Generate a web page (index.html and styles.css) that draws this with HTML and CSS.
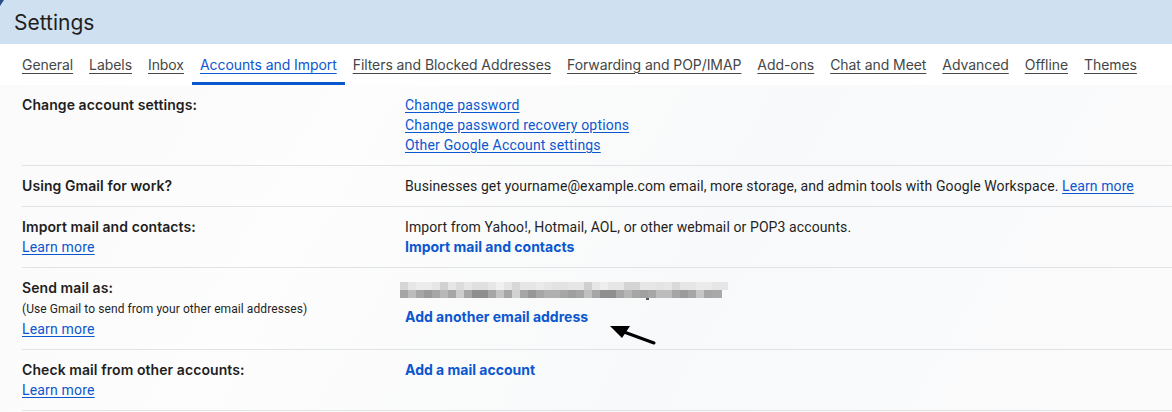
FILE: index.html
```html
<!DOCTYPE html>
<html>
<head>
<meta charset="utf-8">
<link rel="stylesheet" href="styles.css">
</head>
<body>
<div class="page">
  <header class="header">
    <svg class="corner" width="4" height="6" viewBox="0 0 4 6"><polygon points="0,0 4,0 0,6" fill="#2a4f86"/></svg>
    <h1 class="title">Settings</h1>
  </header>
  <nav class="tabs">
    <a class="tab">General</a>
    <a class="tab">Labels</a>
    <a class="tab">Inbox</a>
    <a class="tab active">Accounts and Import</a>
    <a class="tab">Filters and Blocked Addresses</a>
    <a class="tab">Forwarding and POP/IMAP</a>
    <a class="tab">Add-ons</a>
    <a class="tab">Chat and Meet</a>
    <a class="tab">Advanced</a>
    <a class="tab">Offline</a>
    <a class="tab">Themes</a>
  </nav>
  <main class="rows">
    <section class="row">
      <div class="label"><b>Change account settings:</b></div>
      <div class="value">
        <a class="link">Change password</a><br>
        <a class="link">Change password recovery options</a><br>
        <a class="link">Other Google Account settings</a>
      </div>
    </section>
    <section class="row">
      <div class="label"><b>Using Gmail for work?</b></div>
      <div class="value text">Businesses get yourname@example.com email, more storage, and admin tools with Google Workspace. <a class="link">Learn more</a></div>
    </section>
    <section class="row">
      <div class="label"><b>Import mail and contacts:</b><br><a class="link">Learn more</a></div>
      <div class="value text">Import from Yahoo!, Hotmail, AOL, or other webmail or POP3 accounts.<br><a class="action">Import mail and contacts</a></div>
    </section>
    <section class="row">
      <div class="label"><b>Send mail as:</b><br><span class="note">(Use Gmail to send from your other email addresses)</span><br><a class="link">Learn more</a></div>
      <div class="value sendas">
        <svg class="blur" width="328" height="18" viewBox="0 0 328 18">
          <g>
            <rect x="0" y="0" width="328" height="8" fill="#e6e6e6"/>
            <rect x="0" y="0" width="8" height="8" fill="#d6d6d6"/>
            <rect x="16" y="0" width="16" height="8" fill="#ececec"/>
            <rect x="40" y="0" width="8" height="8" fill="#d2d2d2"/>
            <rect x="56" y="0" width="8" height="8" fill="#dcdcdc"/>
            <rect x="72" y="0" width="16" height="8" fill="#e0e0e0"/>
            <rect x="96" y="0" width="8" height="8" fill="#f0f0f0"/>
            <rect x="112" y="0" width="8" height="8" fill="#d8d8d8"/>
            <rect x="136" y="0" width="8" height="8" fill="#eaeaea"/>
            <rect x="152" y="0" width="16" height="8" fill="#e2e2e2"/>
            <rect x="184" y="0" width="8" height="8" fill="#cfcfcf"/>
            <rect x="200" y="0" width="8" height="8" fill="#eeeeee"/>
            <rect x="224" y="0" width="16" height="8" fill="#d4d4d4"/>
            <rect x="256" y="0" width="8" height="8" fill="#e4e4e4"/>
            <rect x="272" y="0" width="8" height="8" fill="#d9d9d9"/>
            <rect x="296" y="0" width="16" height="8" fill="#ebebeb"/>
          </g>
          <g>
            <rect x="0" y="8" width="322" height="8" fill="#a6a6a6"/>
            <rect x="8" y="8" width="8" height="8" fill="#bdbdbd"/>
            <rect x="24" y="8" width="8" height="8" fill="#9a9a9a"/>
            <rect x="40" y="8" width="8" height="8" fill="#b8b8b8"/>
            <rect x="56" y="8" width="8" height="8" fill="#cdcdcd"/>
            <rect x="72" y="8" width="16" height="8" fill="#8e8e8e"/>
            <rect x="96" y="8" width="8" height="8" fill="#c4c4c4"/>
            <rect x="112" y="8" width="8" height="8" fill="#d2d2d2"/>
            <rect x="128" y="8" width="8" height="8" fill="#979797"/>
            <rect x="144" y="8" width="16" height="8" fill="#b0b0b0"/>
            <rect x="168" y="8" width="8" height="8" fill="#9f9f9f"/>
            <rect x="184" y="8" width="8" height="8" fill="#c0c0c0"/>
            <rect x="200" y="8" width="16" height="8" fill="#8f8f8f"/>
            <rect x="224" y="8" width="8" height="8" fill="#b6b6b6"/>
            <rect x="240" y="8" width="8" height="8" fill="#a0a0a0"/>
            <rect x="256" y="8" width="16" height="8" fill="#bcbcbc"/>
            <rect x="280" y="8" width="8" height="8" fill="#9b9b9b"/>
            <rect x="296" y="8" width="8" height="8" fill="#c6c6c6"/>
            <rect x="312" y="8" width="10" height="8" fill="#a9a9a9"/>
            <rect x="246" y="16" width="3" height="2" fill="#555"/>
          </g>
        </svg>
        <a class="action">Add another email address</a>
        <svg class="arrow" width="50" height="24" viewBox="0 0 50 24">
          <line x1="16" y1="9" x2="46" y2="20" stroke="#000" stroke-width="3" stroke-linecap="round"/>
          <polygon points="2,3 22,3 14,15" fill="#000"/>
        </svg>
      </div>
    </section>
    <section class="row">
      <div class="label"><b>Check mail from other accounts:</b><br><a class="link">Learn more</a></div>
      <div class="value"><a class="action">Add a mail account</a></div>
    </section>
  </main>
</div>
</body>
</html>
```
FILE: styles.css
```css
html, body {
  margin: 0;
  padding: 0;
}
body {
  width: 1172px;
  height: 412px;
  overflow: hidden;
  background: #fbfbfc;
  font-family: Inter, "Noto Sans", sans-serif;
  color: #1f1f1f;
}
.page {
  background: linear-gradient(120deg, #fafafb 0%, #fdfdfd 30%, #f8f9fa 60%, #fbfbfc 100%);
  height: 412px;
}
.header {
  position: relative;
  height: 44px;
  background: #cfe0f0;
  display: flex;
  align-items: center;
  padding-left: 14px;
}
.corner {
  position: absolute;
  left: 0;
  top: 0;
}
.title {
  margin: 0;
  font-weight: 400;
  font-size: 21px;
  color: #1f1f1f;
}
.tabs {
  height: 41px;
  background: #fff;
  display: flex;
  align-items: stretch;
  padding-left: 14px;
}
.tab {
  display: flex;
  align-items: center;
  padding: 2px 8px 0;
  border-bottom: 3px solid transparent;
  font-size: 14px;
  letter-spacing: -0.07px;
  color: #444746;
  text-decoration: underline;
  text-underline-offset: 3px;
  text-decoration-thickness: 1px;
  white-space: nowrap;
}
.tab.active {
  color: #0b57d0;
  border-bottom-color: #0b57d0;
}
.rows {
  padding-left: 22px;
}
.row {
  display: grid;
  grid-template-columns: 383px 1fr;
  padding: 10px 0;
  border-bottom: 1px solid #e1e2e4;
  line-height: 20px;
  font-size: 14px;
}
.label b {
  font-weight: 600;
  letter-spacing: 0.08px;
  color: #1f1f1f;
}
.note {
  font-family: Roboto, sans-serif;
  font-size: 12px;
  letter-spacing: 0.08px;
  color: #1f1f1f;
}
.link {
  font-family: Roboto, sans-serif;
  letter-spacing: 0.18px;
  color: #0b57d0;
  text-decoration: underline;
  text-underline-offset: 2px;
}
.text {
  font-family: Roboto, sans-serif;
  letter-spacing: 0.1px;
  color: #1f1f1f;
}
.text .link {
  letter-spacing: 0.1px;
}
.action {
  font-family: Inter, sans-serif;
  letter-spacing: 0;
  color: #0b57d0;
  font-weight: 700;
}
.sendas {
  position: relative;
}
.blur {
  display: block;
  margin: 4px 0 7px -5px;
}
.arrow {
  position: absolute;
  left: 203px;
  top: 45px;
}
```
